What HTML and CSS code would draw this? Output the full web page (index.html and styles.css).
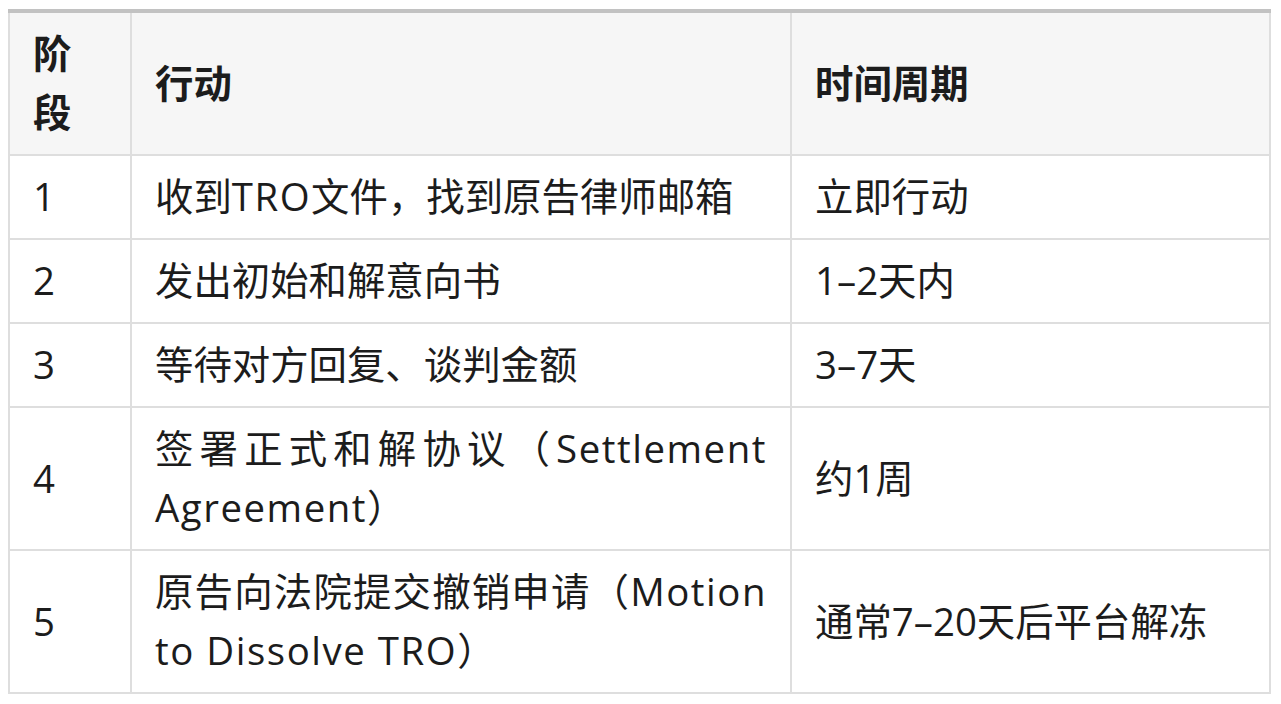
FILE: index.html
```html
<!DOCTYPE html>
<html lang="zh-CN">
<head>
<meta charset="utf-8">
<title>TRO 和解流程</title>
<link rel="stylesheet" href="styles.css">
</head>
<body>
<table class="steps">
  <colgroup>
    <col class="col-stage">
    <col class="col-action">
    <col class="col-time">
  </colgroup>
  <thead>
    <tr>
      <th>阶段</th>
      <th>行动</th>
      <th>时间周期</th>
    </tr>
  </thead>
  <tbody>
    <tr>
      <td>1</td>
      <td>收到<span class="en">TRO</span>文件，找到原告律师邮箱</td>
      <td>立即行动</td>
    </tr>
    <tr>
      <td>2</td>
      <td>发出初始和解意向书</td>
      <td>1–2天内</td>
    </tr>
    <tr>
      <td>3</td>
      <td>等待对方回复、谈判金额</td>
      <td>3–7天</td>
    </tr>
    <tr>
      <td>4</td>
      <td>签署正式和解协议（<span class="en">Settlement Agreement</span>）</td>
      <td>约1周</td>
    </tr>
    <tr>
      <td>5</td>
      <td>原告向法院提交撤销申请（<span class="en">Motion to Dissolve TRO</span>）</td>
      <td>通常7–20天后平台解冻</td>
    </tr>
  </tbody>
</table>
</body>
</html>
```

FILE: styles.css
```css
html, body {
  margin: 0;
  padding: 0;
  background: #ffffff;
}

body {
  padding: 9px 10px 8px 8px;
  font-family: "Open Sans", "Noto Sans CJK SC", sans-serif;
  color: #1c1c1c;
}

.steps {
  width: 100%;
  border-collapse: collapse;
  border-top: 4px solid #c2c2c2;
  font-size: 38.4px;
  line-height: 59px;
}

.col-stage { width: 122px; }
.col-action { width: 660px; }
.col-time { width: auto; }

.steps th,
.steps td {
  border: 2px solid #dedede;
  padding: 11px 23px 12px;
  text-align: justify;
  vertical-align: middle;
}

.steps thead th {
  background: #f6f6f6;
  font-weight: 700;
  border-top: 0;
}

.en {
  letter-spacing: 0.04em;
}
```
